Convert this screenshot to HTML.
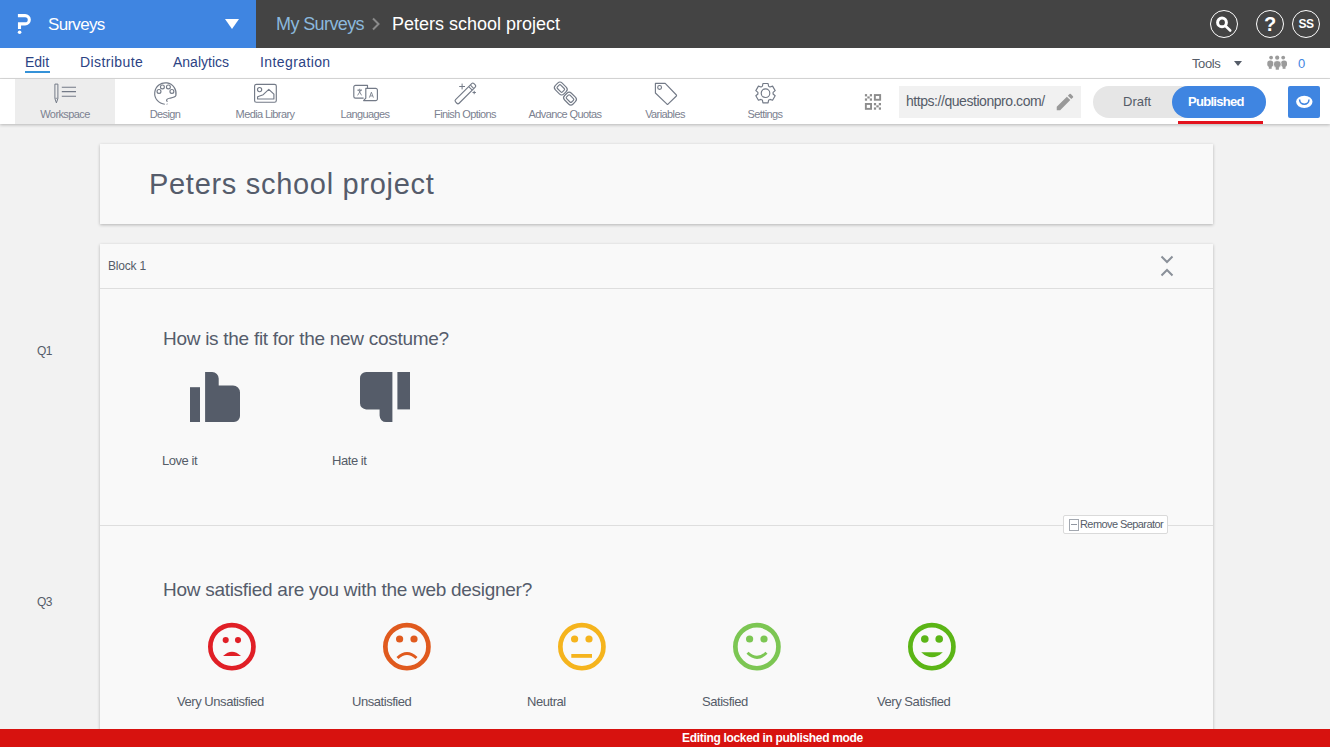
<!DOCTYPE html>
<html><head><meta charset="utf-8">
<style>
*{margin:0;padding:0;box-sizing:border-box}
html,body{width:1330px;height:747px;overflow:hidden;background:#f2f2f2;font-family:"Liberation Sans",sans-serif}
.a{position:absolute;white-space:nowrap}
#hdr{position:absolute;left:0;top:0;width:1330px;height:48px;background:#444444}
#brand{position:absolute;left:0;top:0;width:256px;height:48px;background:#3f85e1}
#nav{position:absolute;left:0;top:48px;width:1330px;height:31px;background:#fff;border-bottom:1px solid #dcdcdc}
#tb{position:absolute;left:0;top:79px;width:1330px;height:45px;background:#fff;box-shadow:0 1px 3px rgba(0,0,0,.25)}
.navi{position:absolute;top:54px;font-size:14px;line-height:16px;color:#2c4384}
.tl{position:absolute;top:108px;width:100px;text-align:center;font-size:11px;line-height:13px;color:#7b8190;letter-spacing:-0.6px}
.card{position:absolute;left:100px;width:1113px;background:#f9f9f9;box-shadow:0 1px 3px rgba(0,0,0,.26)}
.ql{position:absolute;left:37px;font-size:12px;color:#555c68;letter-spacing:-0.7px}
.qt{position:absolute;left:163px;font-size:19px;color:#555c6b;letter-spacing:-0.28px}
.lbl{position:absolute;font-size:13px;color:#555c68;letter-spacing:-0.45px}
svg{position:absolute;overflow:visible}
</style></head><body>
<div id="hdr"></div>
<div id="brand"></div>
<!-- logo -->
<svg style="left:0;top:0" width="40" height="40" viewBox="0 0 40 40"><path d="M17.9 15.6 H25.15 A4.15 4.15 0 0 1 25.15 23.9 H19.5 V29" fill="none" stroke="#fff" stroke-width="3.1"/><circle cx="19.6" cy="32.2" r="1.8" fill="#fff"/></svg>
<div class="a" style="left:48px;top:15px;font-size:17px;line-height:20px;color:#fff;letter-spacing:-0.7px">Surveys</div>
<svg style="left:225px;top:19px" width="14" height="10" viewBox="0 0 14 10"><path d="M0 0 H14 L7 10Z" fill="#fff"/></svg>
<div class="a" style="left:276px;top:13px;font-size:18px;line-height:22px;color:#8bb8dd;letter-spacing:-0.6px">My Surveys</div>
<svg style="left:371px;top:17px" width="10" height="14" viewBox="0 0 10 14"><path d="M2 1.5 L7.5 7 L2 12.5" fill="none" stroke="#8a8a8a" stroke-width="2"/></svg>
<div class="a" style="left:392px;top:13px;font-size:18px;line-height:22px;color:#fff">Peters school project</div>
<!-- top right icons -->
<div class="a" style="left:1210px;top:10px;width:28px;height:28px;border:1px solid #fff;border-radius:50%"></div>
<svg style="left:1215px;top:15px" width="18" height="18" viewBox="0 0 18 18"><circle cx="7" cy="7.45" r="4.4" fill="none" stroke="#fff" stroke-width="3"/><path d="M10.5 11 L15.2 15.5" stroke="#fff" stroke-width="2.6" stroke-linecap="round"/></svg>
<div class="a" style="left:1256px;top:10px;width:28px;height:28px;border:1px solid #fff;border-radius:50%"></div>
<div class="a" style="left:1256px;top:12.5px;width:28px;text-align:center;font-size:20px;line-height:22px;font-weight:bold;color:#fff">?</div>
<div class="a" style="left:1292px;top:10px;width:28px;height:28px;border:1px solid #fff;border-radius:50%"></div>
<div class="a" style="left:1292px;top:16px;width:28px;text-align:center;font-size:12px;line-height:16px;font-weight:bold;color:#fff;letter-spacing:-0.5px">SS</div>

<!-- nav -->
<div id="nav"></div>
<div class="navi" style="left:25px">Edit</div>
<div class="a" style="left:25px;top:71px;width:25px;height:2px;background:#3592d8"></div>
<div class="navi" style="left:80px;letter-spacing:0.4px">Distribute</div>
<div class="navi" style="left:173px">Analytics</div>
<div class="navi" style="left:260px;letter-spacing:0.4px">Integration</div>
<div class="a" style="left:1192px;top:56px;font-size:13px;line-height:15px;color:#555c68;letter-spacing:-0.4px">Tools</div>
<svg style="left:1234px;top:61px" width="8" height="5" viewBox="0 0 8 5"><path d="M0 0H8L4 5Z" fill="#555c68"/></svg>
<svg style="left:0;top:0" width="1330" height="80" viewBox="0 0 1330 80"><g fill="#9b9b9b">
<circle cx="1271.1" cy="57.6" r="1.9"/><circle cx="1283.2" cy="57.6" r="1.9"/>
<rect x="1267.3" y="60.5" width="5.9" height="6.3" rx="2.6"/><rect x="1268.8" y="63" width="2.9" height="5.8"/>
<rect x="1281.1" y="60.5" width="5.9" height="6.3" rx="2.6"/><rect x="1282.6" y="63" width="2.9" height="5.8"/>
<rect x="1273.5" y="60.7" width="7.6" height="7" rx="3.2" stroke="#fff" stroke-width="0.7"/>
<circle cx="1277.2" cy="57.7" r="2.1"/><rect x="1275.7" y="64" width="3.2" height="5.7"/></g></svg>
<div class="a" style="left:1298px;top:56px;font-size:13px;line-height:15px;color:#3f85e1">0</div>

<!-- toolbar -->
<div id="tb"></div>
<div class="a" style="left:15px;top:79px;width:100px;height:45px;background:#ededed"></div>
<div class="tl" style="left:15px">Workspace</div>
<div class="tl" style="left:115px">Design</div>
<div class="tl" style="left:215px">Media Library</div>
<div class="tl" style="left:315px">Languages</div>
<div class="tl" style="left:415px">Finish Options</div>
<div class="tl" style="left:515px">Advance Quotas</div>
<div class="tl" style="left:615px">Variables</div>
<div class="tl" style="left:715px">Settings</div>

<!-- toolbar icons -->
<svg style="left:0;top:0" width="800" height="124" viewBox="0 0 800 124"><g fill="none" stroke="#737a87" stroke-width="1.15" stroke-linejoin="round">
<path d="M54.9 84.1 H57.9 V98.5 L56.4 102.9 L54.9 98.5Z" stroke-width="1"/><path d="M55.2 98.3 H57.6" stroke-width="0.8"/>
<path d="M61.8 87.2 H76 M61.8 91.6 H76 M61.8 96.2 H76" stroke-width="1.1"/>
<path d="M164.8 104.2 A10.7 10.7 0 1 1 175.9 95.6 C175 97.6 172 97.8 169.6 98.2 C167.6 98.5 166.3 99.6 166.6 100.8 L167.5 101.6 M166.9 103.7 L167.3 104.4"/>
<circle cx="159" cy="91.4" r="1.95"/><circle cx="162.4" cy="86.9" r="1.95"/><circle cx="168.4" cy="86.9" r="1.95"/><circle cx="171.9" cy="91.4" r="1.95"/>
<rect x="254.6" y="84.3" width="21.7" height="17.9" rx="1.8"/>
<circle cx="259.6" cy="89.6" r="2.1"/>
<path d="M257.6 99 V96.8 L263.2 94.7 L268.8 89.3 L273.9 94.2 V99 Z"/>
<path d="M355.5 85.3 H367.5 V88.3 M363.6 98.1 H355.5 A1.7 1.7 0 0 1 353.8 96.4 V87 A1.7 1.7 0 0 1 355.5 85.3"/>
<path d="M365.8 88.4 H375.7 A1.7 1.7 0 0 1 377.4 90.1 V98.9 A1.7 1.7 0 0 1 375.7 100.6 H363.6 L365.8 98.2 Z" fill="#fff"/>
<path d="M357.3 90.2 H362 M359.7 88.7 V90.2 M358.4 89.6 L361.6 95.4 M361.2 89.6 L357.6 95.4" stroke-width="0.85"/>
<path d="M369.4 97.6 L371.4 92.2 L373.4 97.6 M370.1 95.9 H372.7" stroke-width="0.85"/>
<g transform="rotate(-45 465.4 93.4)"><rect x="452.4" y="90.9" width="26" height="5" rx="1.6"/><path d="M472.5 91.2 V95.6 M474.8 91.2 V95.6" stroke-width="1"/></g>
<path d="M462.1 83.6 V89.4 M459.2 86.5 H465 M474.2 90.8 V94.2 M472.5 92.5 H475.9" stroke-width="1"/>
<g transform="rotate(45 560.8 88.5)"><rect x="554.8" y="83.7" width="12" height="9.6" rx="3.2"/><rect x="557.2" y="86.1" width="7.2" height="4.8" rx="1.2"/></g>
<g transform="rotate(45 570 98.6)"><rect x="564" y="93.8" width="12" height="9.6" rx="3.2"/><rect x="566.4" y="96.2" width="7.2" height="4.8" rx="1.2"/></g>
<path d="M655.4 83.3 H665.2 L676.4 95 Q676.8 95.5 676.4 96 L668 104.2 Q667.5 104.6 667 104.2 L655.4 93 Z"/>
<circle cx="659.6" cy="87.4" r="1.9"/>
<path d="M762.41 86.26 L762.91 83.54 L768.09 83.54 L768.59 86.26 A7.6 7.6 0 0 1 769.97 87.05 L772.57 86.13 L775.16 90.61 L773.06 92.41 A7.6 7.6 0 0 1 773.06 93.99 L775.16 95.79 L772.57 100.27 L769.97 99.35 A7.6 7.6 0 0 1 768.59 100.14 L768.09 102.86 L762.91 102.86 L762.41 100.14 A7.6 7.6 0 0 1 761.03 99.35 L758.43 100.27 L755.84 95.79 L757.94 93.99 A7.6 7.6 0 0 1 757.94 92.41 L755.84 90.61 L758.43 86.13 L761.03 87.05 A7.6 7.6 0 0 1 762.41 86.26Z"/>
<circle cx="765.5" cy="93.2" r="4.3"/>
</g></svg>
<!-- url -->
<svg style="left:0;top:0" width="900" height="124" viewBox="0 0 900 124"><g fill="#8d8d8d">
<rect x="864.9" y="94.1" width="2.2" height="2.3"/><rect x="869.8" y="94.1" width="2.2" height="2.3"/><rect x="867.3" y="96.4" width="2.4" height="2.1"/><rect x="864.9" y="98.4" width="2.2" height="2.3"/><rect x="869.8" y="98.4" width="2.2" height="2.3"/>
<rect x="873.9" y="103" width="2.2" height="2.3"/><rect x="878.8" y="103" width="2.2" height="2.3"/><rect x="876.3" y="105.3" width="2.4" height="2.1"/><rect x="873.9" y="107.4" width="2.2" height="2.3"/><rect x="878.8" y="107.4" width="2.2" height="2.3"/>
</g><g fill="none" stroke="#8d8d8d" stroke-width="1.9"><rect x="874.85" y="95.05" width="5.3" height="4.7"/><rect x="865.85" y="103.95" width="5.2" height="4.9"/></g></svg>
<div class="a" style="left:899px;top:86px;width:182px;height:32px;background:#f1f1f1"></div>
<div class="a" style="left:906px;top:93px;font-size:14px;line-height:16px;color:#555c68;letter-spacing:-0.45px">https://questionpro.com/</div>
<svg style="left:1054.3px;top:91.3px" width="24" height="24" viewBox="0 0 24 24"><g transform="scale(0.915)"><path d="M3 17.25V21h3.75L17.81 9.94l-3.75-3.75L3 17.25zM20.71 7.04a1 1 0 0 0 0-1.41l-2.34-2.34a1 1 0 0 0-1.41 0l-1.83 1.83 3.75 3.75 1.83-1.83z" fill="#999"/></g></svg>
<div class="a" style="left:1093px;top:86px;width:173px;height:32px;background:#e6e6e6;border-radius:16px"></div>
<div class="a" style="left:1123px;top:94px;font-size:13px;line-height:16px;color:#555c68">Draft</div>
<div class="a" style="left:1172px;top:86px;width:94px;height:32px;background:#3f85e1;border-radius:16px"></div>
<div class="a" style="left:1188px;top:94px;font-size:13px;line-height:16px;color:#fff;font-weight:bold;letter-spacing:-0.7px">Published</div>
<div class="a" style="left:1178px;top:121px;width:85px;height:3px;background:#e3131e"></div>
<div class="a" style="left:1288px;top:86px;width:32px;height:32px;background:#3f85e1;border-radius:2px"></div>
<svg style="left:0;top:0" width="1330" height="124" viewBox="0 0 1330 124"><ellipse cx="1304.3" cy="101.85" rx="8.2" ry="6.05" fill="#fff"/><path d="M1299.6 99.6 A4.7 4.6 0 0 0 1309 99.6" fill="none" stroke="#3f85e1" stroke-width="1.5"/></svg>

<!-- title card -->
<div class="card" style="top:144px;height:80px"></div>
<div class="a" style="left:149px;top:168px;font-size:29px;line-height:32px;color:#555c6b;letter-spacing:0.7px">Peters school project</div>

<!-- block card -->
<div class="card" style="top:244px;height:520px"></div>
<div class="a" style="left:100px;top:288px;width:1113px;height:1px;background:#dedede"></div>
<div class="a" style="left:108px;top:259px;font-size:12px;line-height:14px;color:#555c68;letter-spacing:-0.2px">Block 1</div>
<svg style="left:1160px;top:255px" width="14" height="22" viewBox="0 0 14 22"><path d="M1.5 1.5 L7 7 L12.5 1.5 M1.5 20.5 L7 15 L12.5 20.5" fill="none" stroke="#8a9099" stroke-width="2"/></svg>

<div class="ql" style="top:344px">Q1</div>
<div class="qt" style="top:328px">How is the fit for the new costume?</div>
<svg style="left:0;top:0" width="250" height="430" viewBox="0 0 250 430"><g fill="#555c69"><rect x="190" y="387.2" width="10" height="34.8"/><path d="M205.1 372 H212.2 A6.5 6.5 0 0 1 218.7 378.5 V385.5 H233 A7 7 0 0 1 240 392.5 V416 A6 6 0 0 1 234 422 H205.1Z"/></g></svg>
<svg style="left:0;top:0" width="420" height="430" viewBox="0 0 420 430"><g fill="#555c69"><path d="M366.2 372 H392.4 V422 H386 A6.4 6.4 0 0 1 379.6 415.6 V409.4 H366.2 A6.2 6.2 0 0 1 360 403.2 V378.2 A6.2 6.2 0 0 1 366.2 372Z"/><rect x="397.4" y="372" width="12.6" height="37.4"/></g></svg>
<div class="lbl" style="left:162px;top:453px">Love it</div>
<div class="lbl" style="left:332px;top:453px">Hate it</div>

<div class="a" style="left:100px;top:525px;width:1113px;height:1px;background:#dedede"></div>
<div class="a" style="left:1063px;top:515px;width:105px;height:19px;background:#fff;border:1px solid #dadada;border-radius:2px"></div>
<div class="a" style="left:1069px;top:519px;width:10px;height:12px;border:1px solid #a3a8b0"></div>
<div class="a" style="left:1071px;top:524px;width:6px;height:1px;background:#9096a0"></div>
<div class="a" style="left:1080px;top:517px;font-size:11px;line-height:14px;color:#555c68;letter-spacing:-0.58px">Remove Separator</div>

<div class="ql" style="top:595px">Q3</div>
<div class="qt" style="top:579px">How satisfied are you with the web designer?</div>

<svg style="left:0;top:0" width="1330" height="747" viewBox="0 0 1330 747">
<g fill="#e01f26"><circle cx="231.9" cy="646.7" r="21.55" fill="none" stroke="#e01f26" stroke-width="4.7"/>
<circle cx="225.7" cy="640.1" r="3.05"/><circle cx="238" cy="640.1" r="3.05"/>
<path d="M223 656.1 Q232 647.5 241 656.1Z"/>
</g>
<g fill="#e05a1e"><circle cx="406.9" cy="646.7" r="21.55" fill="none" stroke="#e05a1e" stroke-width="4.7"/>
<circle cx="399.6" cy="639" r="3.6"/><circle cx="414" cy="639" r="3.6"/>
<path d="M397.5 658 Q407 649 416.5 658" fill="none" stroke="#e05a1e" stroke-width="2.9"/>
</g>
<g fill="#f5b41d"><circle cx="581.9" cy="646.7" r="21.55" fill="none" stroke="#f5b41d" stroke-width="4.7"/>
<circle cx="574.6" cy="639" r="3.6"/><circle cx="589" cy="639" r="3.6"/>
<rect x="571.3" y="654" width="20.7" height="3.8"/>
</g>
<g fill="#7cc653"><circle cx="756.9" cy="646.7" r="21.55" fill="none" stroke="#7cc653" stroke-width="4.7"/>
<circle cx="749.6" cy="639" r="3.6"/><circle cx="764" cy="639" r="3.6"/>
<path d="M747.5 652.8 Q757 662 766.5 652.8" fill="none" stroke="#7cc653" stroke-width="2.9"/>
</g>
<g fill="#5bb516"><circle cx="931.9" cy="646.7" r="21.55" fill="none" stroke="#5bb516" stroke-width="4.7"/>
<circle cx="924.8" cy="639" r="3.8"/><circle cx="939.2" cy="639" r="3.8"/>
<path d="M921.2 652.2 H942.8 Q932 662.5 921.2 652.2Z"/>
</g>
</svg>
<div class="lbl" style="left:177px;top:694px">Very Unsatisfied</div>
<div class="lbl" style="left:352px;top:694px">Unsatisfied</div>
<div class="lbl" style="left:527px;top:694px">Neutral</div>
<div class="lbl" style="left:702px;top:694px">Satisfied</div>
<div class="lbl" style="left:877px;top:694px">Very Satisfied</div>

<!-- red bar -->
<div class="a" style="left:0;top:729px;width:1330px;height:18px;background:#d7120f"></div>
<div class="a" style="left:215px;top:731px;width:1115px;text-align:center;font-size:12px;line-height:15px;color:#fff;font-weight:bold;letter-spacing:-0.33px">Editing locked in published mode</div>
</body></html>
